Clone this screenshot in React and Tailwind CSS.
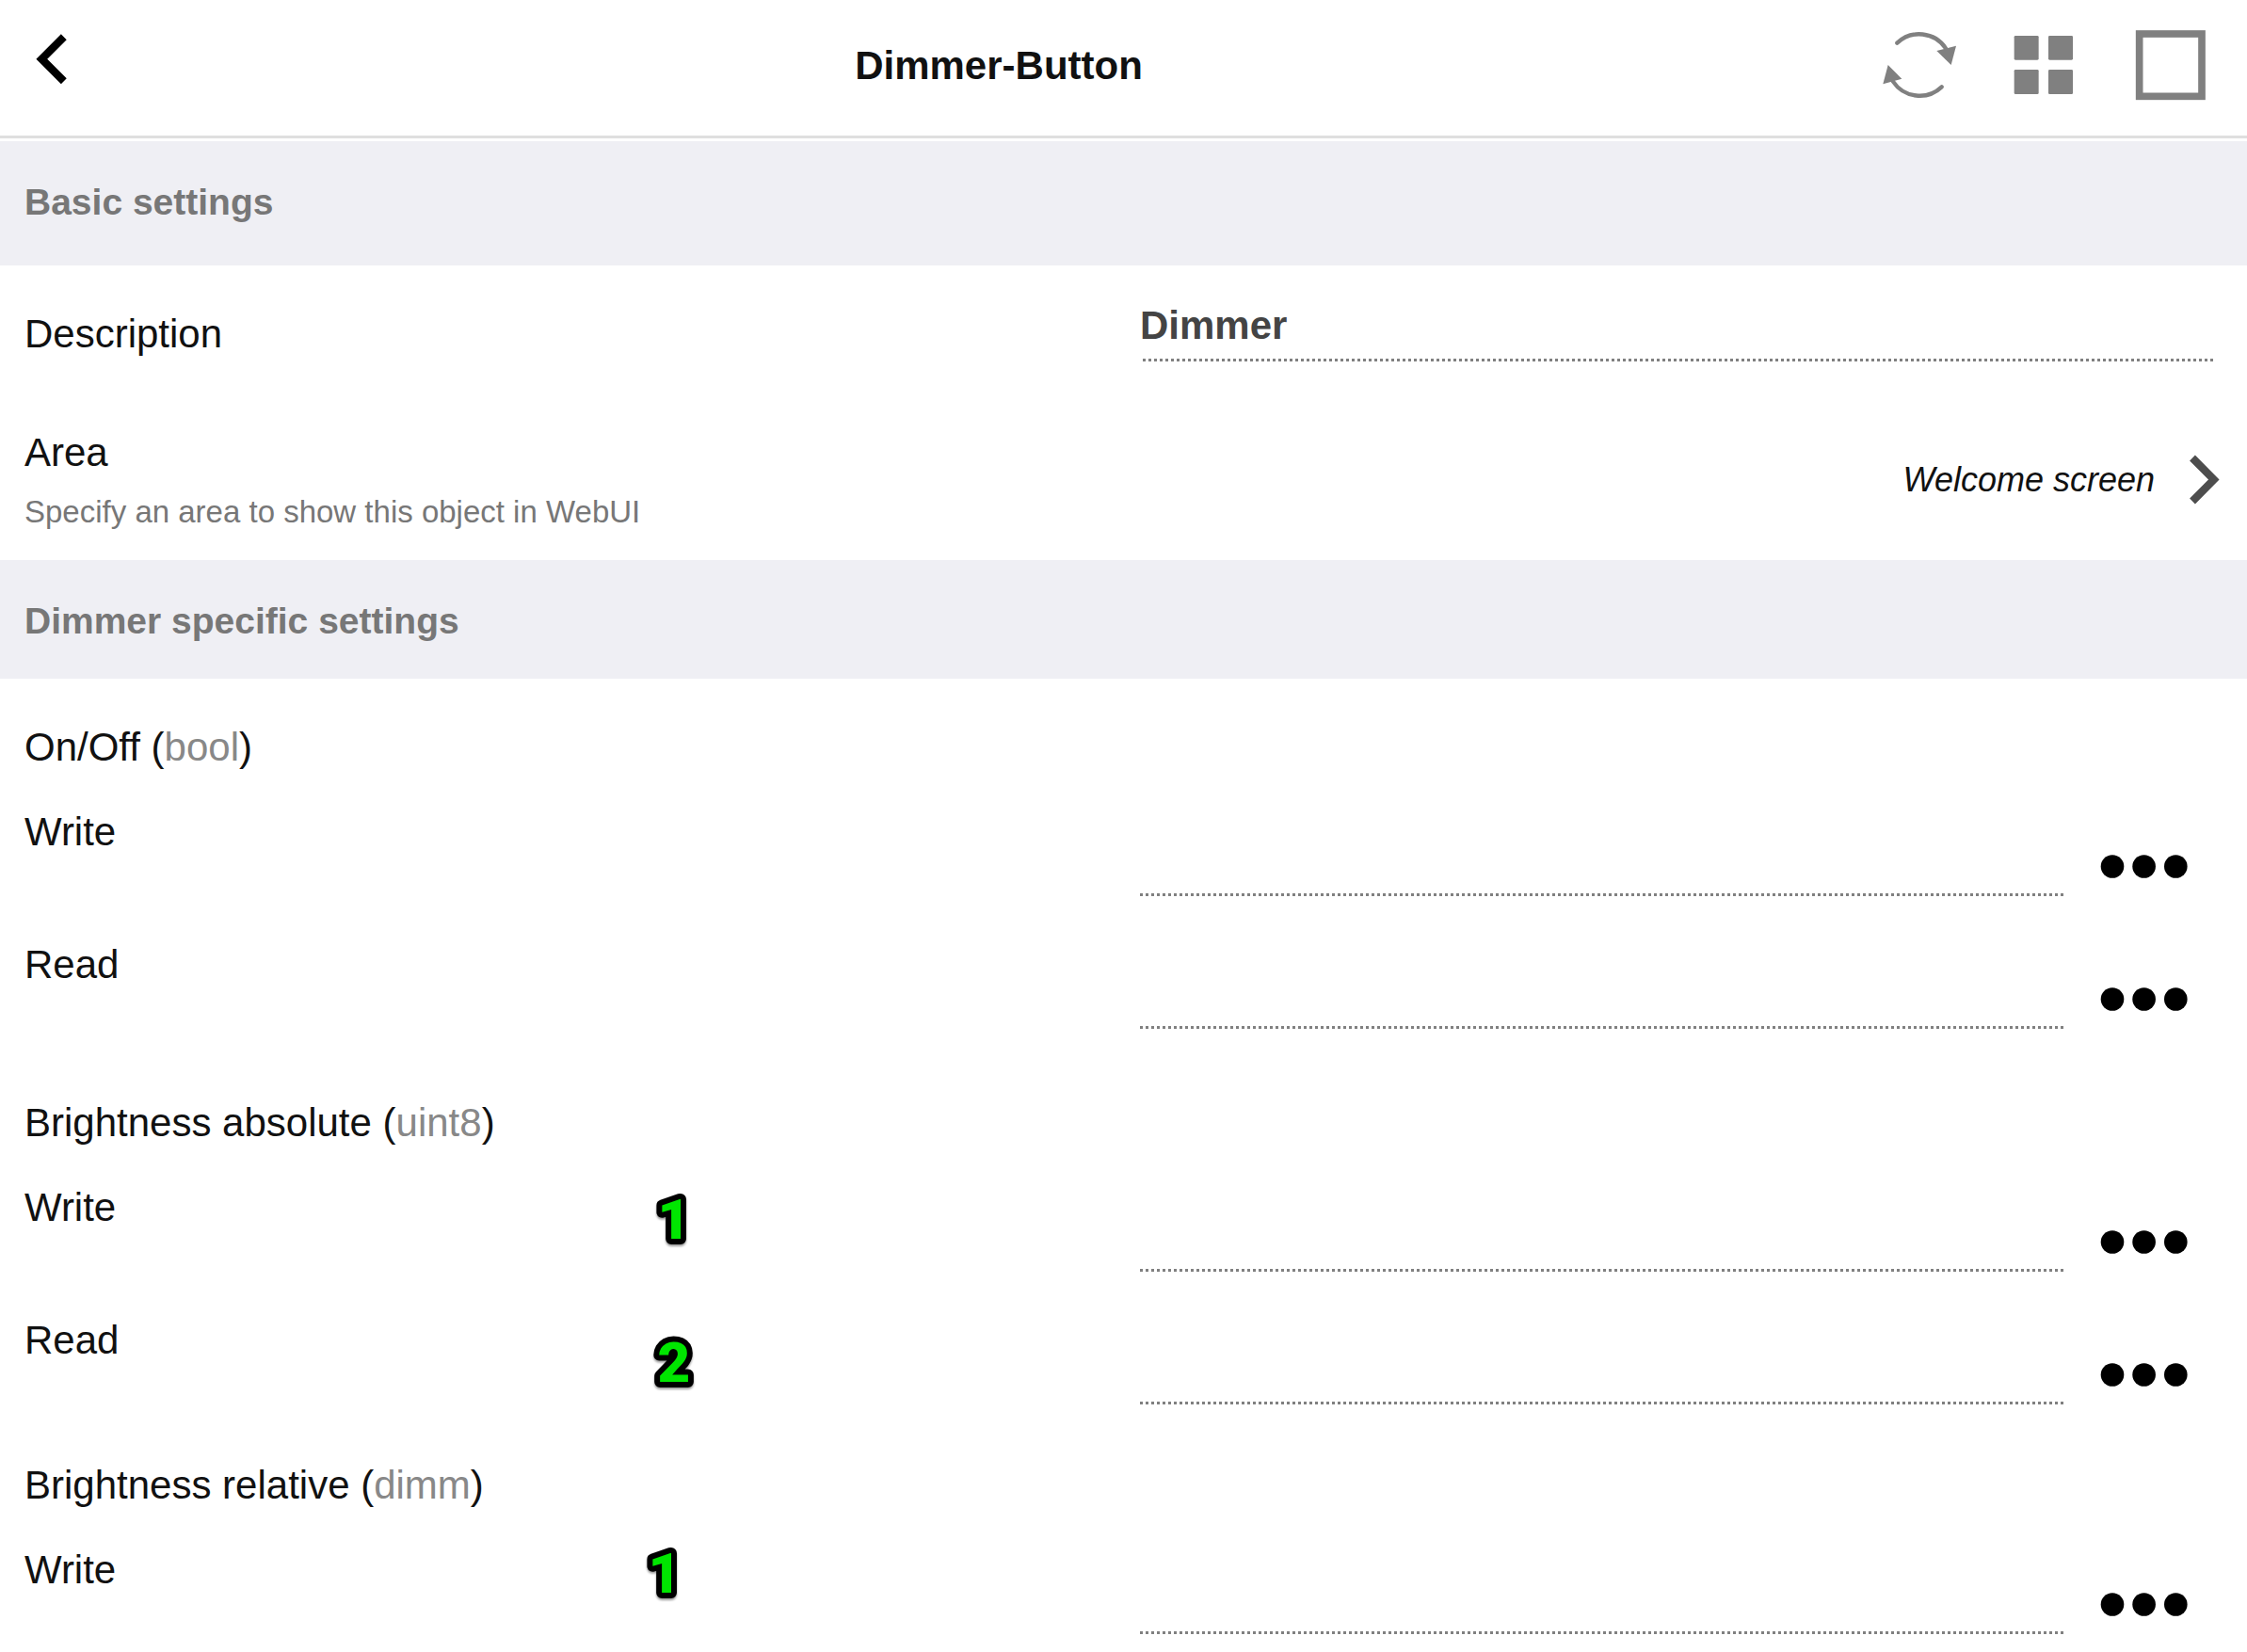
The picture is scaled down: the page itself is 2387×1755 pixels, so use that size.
import { useState } from "react";

const groups = [
  {
    id: "onoff",
    name: "On/Off",
    type: "bool",
    spacing: "mt-[49px]",
    points: [{ label: "Write" }, { label: "Read" }],
  },
  {
    id: "absolute",
    name: "Brightness absolute",
    type: "uint8",
    spacing: "mt-[76px]",
    points: [
      { label: "Write", mark: "1", markPos: "left-[686px] top-0" },
      { label: "Read", mark: "2", markPos: "left-[686px] top-[11px]" },
    ],
  },
  {
    id: "relative",
    name: "Brightness relative",
    type: "dimm",
    spacing: "mt-[62px]",
    points: [{ label: "Write", mark: "1", markPos: "left-[676px] -top-[9px]" }],
  },
];

function BackIcon() {
  return (
    <svg width="60" height="72" viewBox="24 33 60 72" fill="none" aria-hidden="true">
      <path d="M67.8 39.2 44.3 62.7 67.8 86.2" stroke="#000" strokeWidth="8.3" />
    </svg>
  );
}

function RefreshIcon() {
  return (
    <svg width="80" height="76" viewBox="117 93 240 228" fill="none" aria-hidden="true">
      <g stroke="#808080" strokeWidth="13" strokeLinecap="round">
        <path d="M166 137A102 102 0 0 1 321 154" />
        <path d="M308 277A102 102 0 0 1 153 260" />
      </g>
      <path d="M292 162 354 146 338 207Z" fill="#808080" />
      <path d="M137 207 181 251 121 268Z" fill="#808080" />
    </svg>
  );
}

function GridIcon() {
  return (
    <svg width="64" height="64" viewBox="537 111 192 192" fill="#808080" aria-hidden="true">
      <rect x="539" y="114" width="78" height="77" rx="4" />
      <rect x="648" y="114" width="78" height="77" rx="4" />
      <rect x="539" y="222" width="78" height="78" rx="4" />
      <rect x="648" y="222" width="78" height="78" rx="4" />
    </svg>
  );
}

function SquareIcon() {
  return (
    <svg width="80" height="76" viewBox="909 93 240 228" fill="none" aria-hidden="true">
      <rect x="938" y="108" width="199" height="199" stroke="#808080" strokeWidth="23" />
    </svg>
  );
}

function DotsIcon() {
  return (
    <svg width="94" height="26" viewBox="0 0 94 26" aria-hidden="true">
      <circle cx="13" cy="12.5" r="12.3" />
      <circle cx="46.6" cy="12.5" r="12.3" />
      <circle cx="80.3" cy="12.5" r="12.3" />
    </svg>
  );
}

// Numbered callout that floats over a row
function Marker({ value, position }) {
  return (
    <svg
      width="60"
      height="72"
      className={`absolute ${position} drop-shadow-[0_2px_1px_rgba(0,0,0,0.4)]`}
    >
      <text
        x="30"
        y="57"
        textAnchor="middle"
        className="font-['Roboto',sans-serif] text-[60px] font-black"
        fill="#00e600"
        stroke="#000"
        strokeWidth="12"
        strokeLinejoin="round"
        paintOrder="stroke"
      >
        {value}
      </text>
    </svg>
  );
}

function TextField({ id, value, onChange }) {
  return (
    <input
      id={id}
      type="text"
      value={value}
      onChange={(e) => onChange(e.target.value)}
      className="h-[62px] w-full min-w-0 flex-1 bg-[repeating-linear-gradient(270deg,#808080_0_3px,transparent_3px_6px)] bg-[length:100%_3px] bg-bottom bg-no-repeat pb-[14px] text-[42px] leading-[48px] font-bold text-[#444] outline-none"
    />
  );
}

function SectionTitle({ children, className }) {
  return (
    <h2
      className={`bg-[#efeff4] px-[26px] pt-[43px] text-[39px] leading-[44px] font-bold text-[#777] ${className}`}
    >
      {children}
    </h2>
  );
}

function PointRow({ groupId, point }) {
  const [value, setValue] = useState("");
  const id = `${groupId}-${point.label.toLowerCase()}`;

  return (
    <div className="relative grid grid-cols-2 gap-[45px] pr-9 pl-[26px]">
      <label htmlFor={id} className="self-start">
        {point.label}
      </label>
      <div className="flex items-center pt-[30px]">
        <TextField id={id} value={value} onChange={setValue} />
        <button type="button" aria-label={`Select ${point.label}`} className="w-[159px] pl-[39px]">
          <DotsIcon />
        </button>
      </div>
      {point.mark && <Marker value={point.mark} position={point.markPos} />}
    </div>
  );
}

export default function App() {
  const [description, setDescription] = useState("Dimmer");

  return (
    <div className="w-full bg-white font-['Liberation_Sans',Arial,sans-serif] text-[42px] leading-[48px] text-[#111]">
      {/* Header */}
      <header className="mb-[3px] flex items-center border-b-[3px] border-[#dfdfdf] pt-[31px] pb-[37px]">
        <button type="button" aria-label="Back" className="w-[123px] pl-6">
          <BackIcon />
        </button>
        <h1 className="flex-1 pt-0.5 text-center font-bold">Dimmer-Button</h1>
        <div className="flex items-center gap-[60px] pr-11">
          <button type="button" aria-label="Refresh">
            <RefreshIcon />
          </button>
          <button type="button" aria-label="Overview">
            <GridIcon />
          </button>
          <button type="button" aria-label="Fullscreen">
            <SquareIcon />
          </button>
        </div>
      </header>

      {/* Basic settings */}
      <SectionTitle className="pb-[45px]">Basic settings</SectionTitle>

      <div className="grid grid-cols-2 items-center gap-[45px] pt-10 pr-9 pl-[26px]">
        <label htmlFor="description" className="pt-1">
          Description
        </label>
        <div className="flex">
          <TextField id="description" value={description} onChange={setDescription} />
        </div>
      </div>

      <a
        href="#area"
        className="mt-[73px] flex items-center justify-between pr-[26px] pb-8 pl-[26px]"
      >
        <div className="flex flex-col gap-5">
          <span>Area</span>
          <span className="text-[33px] leading-[38px] text-[#777]">
            Specify an area to show this object in WebUI
          </span>
        </div>
        <div className="flex items-center gap-9">
          <span className="text-[36px] leading-[42px] italic">Welcome screen</span>
          <svg width="36" height="60" viewBox="2325 479 36 60" fill="none" aria-hidden="true">
            <path d="M2329 485.5 2351.8 508.5 2329 531.5" stroke="#4d4d4d" strokeWidth="8.2" />
          </svg>
        </div>
      </a>

      {/* Dimmer specific settings */}
      <SectionTitle className="pb-[39px]">Dimmer specific settings</SectionTitle>

      {groups.map((group) => (
        <section key={group.id} className={group.spacing}>
          <h3 className="mb-[42px] px-[26px]">
            {group.name} (<span className="text-[#888]">{group.type}</span>)
          </h3>
          <div className="flex flex-col gap-[49px]">
            {group.points.map((point) => (
              <PointRow key={point.label} groupId={group.id} point={point} />
            ))}
          </div>
        </section>
      ))}
    </div>
  );
}
